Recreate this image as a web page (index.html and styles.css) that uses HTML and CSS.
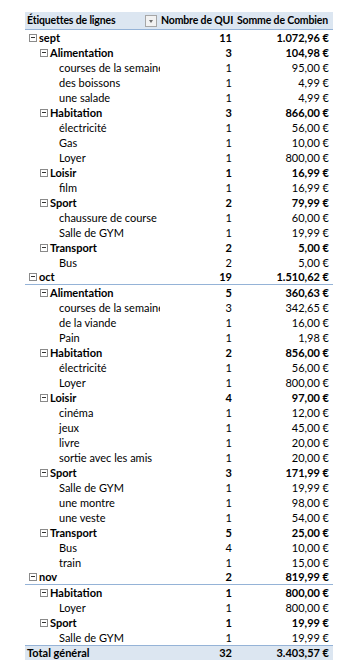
FILE: index.html
```html
<!DOCTYPE html>
<html lang="fr">
<head>
<meta charset="utf-8">
<link rel="stylesheet" href="styles.css">
</head>
<body>
<div class="pivot">
  <div class="row head">
    <div class="c1"><span class="lbl">Étiquettes de lignes</span><span class="filter"></span></div>
    <div class="c2">Nombre de QUI</div>
    <div class="c3">Somme de Combien</div>
  </div>

  <div class="row l0"><div class="c1"><span class="tog"></span>sept</div><div class="c2">11</div><div class="c3">1.072,96 €</div></div>
  <div class="row l1"><div class="c1"><span class="tog"></span>Alimentation</div><div class="c2">3</div><div class="c3">104,98 €</div></div>
  <div class="row l2"><div class="c1">courses de la semaine</div><div class="c2">1</div><div class="c3">95,00 €</div></div>
  <div class="row l2"><div class="c1">des boissons</div><div class="c2">1</div><div class="c3">4,99 €</div></div>
  <div class="row l2"><div class="c1">une salade</div><div class="c2">1</div><div class="c3">4,99 €</div></div>
  <div class="row l1"><div class="c1"><span class="tog"></span>Habitation</div><div class="c2">3</div><div class="c3">866,00 €</div></div>
  <div class="row l2"><div class="c1">électricité</div><div class="c2">1</div><div class="c3">56,00 €</div></div>
  <div class="row l2"><div class="c1">Gas</div><div class="c2">1</div><div class="c3">10,00 €</div></div>
  <div class="row l2"><div class="c1">Loyer</div><div class="c2">1</div><div class="c3">800,00 €</div></div>
  <div class="row l1"><div class="c1"><span class="tog"></span>Loisir</div><div class="c2">1</div><div class="c3">16,99 €</div></div>
  <div class="row l2"><div class="c1">film</div><div class="c2">1</div><div class="c3">16,99 €</div></div>
  <div class="row l1"><div class="c1"><span class="tog"></span>Sport</div><div class="c2">2</div><div class="c3">79,99 €</div></div>
  <div class="row l2"><div class="c1">chaussure de course</div><div class="c2">1</div><div class="c3">60,00 €</div></div>
  <div class="row l2"><div class="c1">Salle de GYM</div><div class="c2">1</div><div class="c3">19,99 €</div></div>
  <div class="row l1"><div class="c1"><span class="tog"></span>Transport</div><div class="c2">2</div><div class="c3">5,00 €</div></div>
  <div class="row l2"><div class="c1">Bus</div><div class="c2">2</div><div class="c3">5,00 €</div></div>

  <div class="row l0 sep"><div class="c1"><span class="tog"></span>oct</div><div class="c2">19</div><div class="c3">1.510,62 €</div></div>
  <div class="row l1"><div class="c1"><span class="tog"></span>Alimentation</div><div class="c2">5</div><div class="c3">360,63 €</div></div>
  <div class="row l2"><div class="c1">courses de la semaine</div><div class="c2">3</div><div class="c3">342,65 €</div></div>
  <div class="row l2"><div class="c1">de la viande</div><div class="c2">1</div><div class="c3">16,00 €</div></div>
  <div class="row l2"><div class="c1">Pain</div><div class="c2">1</div><div class="c3">1,98 €</div></div>
  <div class="row l1"><div class="c1"><span class="tog"></span>Habitation</div><div class="c2">2</div><div class="c3">856,00 €</div></div>
  <div class="row l2"><div class="c1">électricité</div><div class="c2">1</div><div class="c3">56,00 €</div></div>
  <div class="row l2"><div class="c1">Loyer</div><div class="c2">1</div><div class="c3">800,00 €</div></div>
  <div class="row l1"><div class="c1"><span class="tog"></span>Loisir</div><div class="c2">4</div><div class="c3">97,00 €</div></div>
  <div class="row l2"><div class="c1">cinéma</div><div class="c2">1</div><div class="c3">12,00 €</div></div>
  <div class="row l2"><div class="c1">jeux</div><div class="c2">1</div><div class="c3">45,00 €</div></div>
  <div class="row l2"><div class="c1">livre</div><div class="c2">1</div><div class="c3">20,00 €</div></div>
  <div class="row l2"><div class="c1">sortie avec les amis</div><div class="c2">1</div><div class="c3">20,00 €</div></div>
  <div class="row l1"><div class="c1"><span class="tog"></span>Sport</div><div class="c2">3</div><div class="c3">171,99 €</div></div>
  <div class="row l2"><div class="c1">Salle de GYM</div><div class="c2">1</div><div class="c3">19,99 €</div></div>
  <div class="row l2"><div class="c1">une montre</div><div class="c2">1</div><div class="c3">98,00 €</div></div>
  <div class="row l2"><div class="c1">une veste</div><div class="c2">1</div><div class="c3">54,00 €</div></div>
  <div class="row l1"><div class="c1"><span class="tog"></span>Transport</div><div class="c2">5</div><div class="c3">25,00 €</div></div>
  <div class="row l2"><div class="c1">Bus</div><div class="c2">4</div><div class="c3">10,00 €</div></div>
  <div class="row l2"><div class="c1">train</div><div class="c2">1</div><div class="c3">15,00 €</div></div>

  <div class="row l0 sep"><div class="c1"><span class="tog"></span>nov</div><div class="c2">2</div><div class="c3">819,99 €</div></div>
  <div class="row l1"><div class="c1"><span class="tog"></span>Habitation</div><div class="c2">1</div><div class="c3">800,00 €</div></div>
  <div class="row l2"><div class="c1">Loyer</div><div class="c2">1</div><div class="c3">800,00 €</div></div>
  <div class="row l1"><div class="c1"><span class="tog"></span>Sport</div><div class="c2">1</div><div class="c3">19,99 €</div></div>
  <div class="row l2"><div class="c1">Salle de GYM</div><div class="c2">1</div><div class="c3">19,99 €</div></div>

  <div class="row total"><div class="c1">Total général</div><div class="c2">32</div><div class="c3">3.403,57 €</div></div>
</div>
</body>
</html>
```

FILE: styles.css
```css
* { box-sizing: border-box; }
html, body { margin: 0; padding: 0; background: #fff; }
body {
  font-family: Lato, "Open Sans", sans-serif;
  font-size: 11px;
  color: #000;
}
.pivot {
  width: 308px;
  margin: 12px 0 0 25px;
}
.row {
  display: grid;
  grid-template-columns: 135px 75px 98px;
  height: 15px;
  line-height: 15px;
  white-space: nowrap;
}
.row > div { overflow: hidden; }
.c1 { display: flex; align-items: center; }
.c2 { text-align: right; padding-right: 3px; }
.c3 { text-align: right; padding-right: 4px; }

.head {
  height: 18px;
  line-height: 17px;
  background: #dce6f1;
  border-bottom: 1px solid #95b3d7;
  font-weight: 700;
  font-size: 10.5px;
  letter-spacing: -0.15px;
}
.head .c1 { padding-left: 2px; justify-content: space-between; padding-right: 3px; }
.head .c2 { text-align: left; padding-left: 1px; padding-right: 0; }
.head .c3 { text-align: left; padding-left: 2px; padding-right: 0; }
.filter {
  width: 12px;
  height: 12px;
  border: 1px solid #a6a6a6;
  background: #f2f2f2;
  position: relative;
  flex: none;
}
.filter::after {
  content: "";
  position: absolute;
  left: 3px;
  top: 4px;
  border-left: 2.5px solid transparent;
  border-right: 2.5px solid transparent;
  border-top: 3px solid #6d6d6d;
}

.tog {
  width: 8px;
  height: 8px;
  border: 1px solid #8a8a8a;
  margin-right: 2px;
  position: relative;
  flex: none;
  background: #fff;
}
.tog::after {
  content: "";
  position: absolute;
  left: 1px;
  top: 2px;
  width: 4px;
  height: 1px;
  background: #333;
}
.l0 { font-weight: 700; }
.l0 .c1 { padding-left: 4px; }
.l1 { font-weight: 700; }
.l1 .c1 { padding-left: 15px; }
.l2 .c1 { padding-left: 34px; }
.sep { border-bottom: 1px solid #95b3d7; line-height: 14px; }
.total {
  font-weight: 700;
  background: #dce6f1;
  border-top: 1px solid #95b3d7;
  line-height: 14px;
}
.total .c1 { padding-left: 2px; }
```
